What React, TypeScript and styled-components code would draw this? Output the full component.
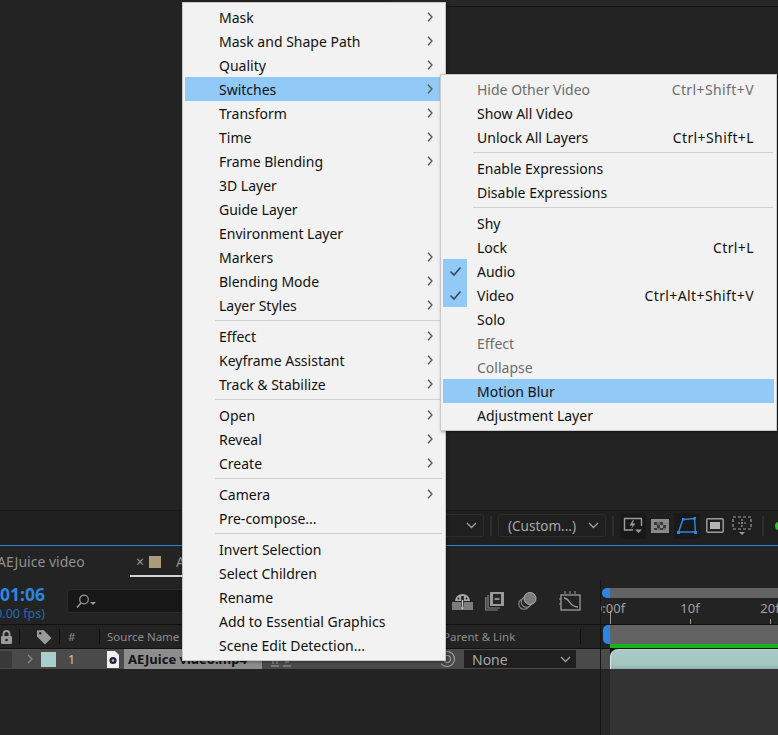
import React from 'react';
import styled, { createGlobalStyle } from 'styled-components';

type MenuEntry = {
  label?: string;
  sub?: boolean;
  shortcut?: string;
  disabled?: boolean;
  active?: boolean;
  checked?: boolean;
  sep?: boolean;
};

const layerMenu: MenuEntry[] = [
  { label: 'Mask', sub: true },
  { label: 'Mask and Shape Path', sub: true },
  { label: 'Quality', sub: true },
  { label: 'Switches', sub: true, active: true },
  { label: 'Transform', sub: true },
  { label: 'Time', sub: true },
  { label: 'Frame Blending', sub: true },
  { label: '3D Layer' },
  { label: 'Guide Layer' },
  { label: 'Environment Layer' },
  { label: 'Markers', sub: true },
  { label: 'Blending Mode', sub: true },
  { label: 'Layer Styles', sub: true },
  { sep: true },
  { label: 'Effect', sub: true },
  { label: 'Keyframe Assistant', sub: true },
  { label: 'Track & Stabilize', sub: true },
  { sep: true },
  { label: 'Open', sub: true },
  { label: 'Reveal', sub: true },
  { label: 'Create', sub: true },
  { sep: true },
  { label: 'Camera', sub: true },
  { label: 'Pre-compose...' },
  { sep: true },
  { label: 'Invert Selection' },
  { label: 'Select Children' },
  { label: 'Rename' },
  { label: 'Add to Essential Graphics' },
  { label: 'Scene Edit Detection...' },
];

const switchesMenu: MenuEntry[] = [
  { label: 'Hide Other Video', shortcut: 'Ctrl+Shift+V', disabled: true },
  { label: 'Show All Video' },
  { label: 'Unlock All Layers', shortcut: 'Ctrl+Shift+L' },
  { sep: true },
  { label: 'Enable Expressions' },
  { label: 'Disable Expressions' },
  { sep: true },
  { label: 'Shy' },
  { label: 'Lock', shortcut: 'Ctrl+L' },
  { label: 'Audio', checked: true },
  { label: 'Video', shortcut: 'Ctrl+Alt+Shift+V', checked: true },
  { label: 'Solo' },
  { label: 'Effect', disabled: true },
  { label: 'Collapse', disabled: true },
  { label: 'Motion Blur', active: true },
  { label: 'Adjustment Layer' },
];

const GlobalStyle = createGlobalStyle`
  html, body {
    margin: 0;
    padding: 0;
    background: #232323;
  }
`;

const Page = styled.div`
  position: relative;
  width: 778px;
  height: 735px;
  overflow: hidden;
  display: flex;
  flex-direction: column;
  background: #232323;
  font-family: 'Noto Sans', 'Open Sans', sans-serif;
`;

const TopEdge = styled.div`
  height: 7px;
  flex: none;
  padding-left: 391px;
  box-sizing: border-box;
  &::after {
    content: '';
    display: block;
    height: 7px;
    box-sizing: border-box;
    background: #262626;
    border-bottom: 1px solid #141414;
  }
`;

const Viewer = styled.div`
  flex: none;
  height: 503px;
`;

const ViewerToolbar = styled.div`
  flex: none;
  height: 35px;
  box-sizing: border-box;
  padding: 0 0 5px 440px;
  display: flex;
  align-items: center;
  background: #1f1f1f;
  border-top: 1px solid #1a1a1a;
`;

const Select = styled.div<{ $w: number }>`
  width: ${(p) => p.$w}px;
  height: 23px;
  flex: none;
  box-sizing: border-box;
  padding: 0 6px 0 9px;
  display: flex;
  align-items: center;
  justify-content: space-between;
  border: 1px solid #2c2c2c;
  border-radius: 3px;
  font-size: 13.5px;
  color: #a8a8a8;
`;

const ToolSep = styled.div<{ $mx: number }>`
  width: 2px;
  height: 20px;
  flex: none;
  margin: 0 ${(p) => p.$mx}px;
  background: #2e2e2e;
`;

const ToolButton = styled.div<{ $on?: boolean; $w: number; $ml?: number }>`
  width: ${(p) => p.$w}px;
  height: 26px;
  flex: none;
  margin-left: ${(p) => p.$ml ?? 0}px;
  display: flex;
  align-items: center;
  justify-content: center;
  background: ${(p) => (p.$on ? '#191919' : 'transparent')};
  border-radius: 3px;
`;

const GreenDot = styled.div`
  width: 8px;
  height: 8px;
  flex: none;
  border-radius: 50%;
  background: #22c71f;
  margin-left: 2px;
`;

const BlueLine = styled.div`
  height: 1px;
  flex: none;
  background: #2d84d8;
`;

const TabsRow = styled.div`
  flex: none;
  height: 34px;
  display: flex;
  margin-left: -3px;
`;

const Tab = styled.div<{ $w: number; $on?: boolean }>`
  width: ${(p) => p.$w}px;
  height: 31px;
  flex: none;
  box-sizing: border-box;
  padding-top: 2px;
  display: flex;
  align-items: center;
  font-size: 14px;
  color: #8f8f8f;
  white-space: nowrap;
  border-bottom: 2px solid ${(p) => (p.$on ? '#d2d2d2' : 'transparent')};
`;

const TabClose = styled.span`
  width: 19px;
  flex: none;
  padding-left: 1px;
  box-sizing: border-box;
  font-size: 14px;
  text-align: center;
  color: #9a9a9a;
`;

const TabSwatch = styled.span`
  width: 12px;
  height: 12px;
  flex: none;
  margin-right: 15px;
  background: #ab9b78;
`;

const Workspace = styled.div`
  flex: 1;
  min-height: 0;
  display: grid;
  grid-template-columns: 601px 1fr;
`;

const LeftPane = styled.div`
  display: flex;
  flex-direction: column;
  border-right: 1px solid #141414;
  min-width: 0;
`;

const ControlsRow = styled.div`
  flex: none;
  height: 44px;
  display: flex;
  align-items: center;
  padding-right: 19px;
`;

const TimeBlock = styled.div`
  width: 45px;
  flex: none;
  overflow: hidden;
  display: flex;
  flex-direction: column;
  align-items: flex-end;
  white-space: nowrap;
  color: #2b86e0;
  margin-top: 2px;
`;

const TimeCode = styled.div`
  font-size: 17.5px;
  font-weight: 700;
  line-height: 21px;
`;

const Fps = styled.div`
  font-size: 12.5px;
  line-height: 17px;
  color: #1f6cb8;
`;

const SearchBox = styled.div`
  width: 200px;
  height: 24px;
  flex: none;
  margin: -2px 0 0 22px;
  box-sizing: border-box;
  padding-left: 8px;
  display: flex;
  align-items: center;
  background: #171717;
  border: 1px solid #2a2a2a;
  border-radius: 3px;
`;

const RowIcons = styled.div`
  margin-left: auto;
  margin-top: -2px;
  display: flex;
  align-items: center;
`;

const RowIcon = styled.div<{ $ml?: number }>`
  display: flex;
  margin-left: ${(p) => p.$ml ?? 0}px;
`;

const HeaderRow = styled.div`
  flex: none;
  height: 25px;
  box-sizing: border-box;
  display: flex;
  align-items: center;
  background: #232323;
  border-top: 1px solid #111;
  border-bottom: 1px solid #111;
  font-size: 11.5px;
  color: #8c8c8c;
`;

const HeaderCell = styled.div<{ $w: number; $pl: number; $push?: boolean }>`
  width: ${(p) => p.$w}px;
  height: 15px;
  flex: none;
  box-sizing: border-box;
  padding-left: ${(p) => p.$pl}px;
  display: flex;
  align-items: center;
  white-space: nowrap;
  border-right: 1px solid #0f0f0f;
  margin-left: ${(p) => (p.$push ? 'auto' : 0)};
  margin-right: ${(p) => (p.$push ? '19px' : 0)};
`;

const LayerRow = styled.div`
  flex: none;
  height: 20px;
  display: flex;
  align-items: center;
  background: #4a4a4a;
  color: #c4c4c4;
  white-space: nowrap;
`;

const AvBox = styled.div`
  width: 12px;
  height: 17px;
  flex: none;
  background: #393939;
`;

const Twirl = styled.div`
  width: 29px;
  flex: none;
  padding-left: 15px;
  box-sizing: border-box;
  display: flex;
`;

const LabelSwatch = styled.div`
  width: 15px;
  height: 15px;
  flex: none;
  background: #a9cfcc;
`;

const LayerIndex = styled.div`
  width: 51px;
  flex: none;
  padding-left: 12px;
  box-sizing: border-box;
  font-size: 12.5px;
`;

const SourceIcon = styled.div`
  width: 17px;
  flex: none;
  display: flex;
`;

const SourceName = styled.div`
  width: 138px;
  height: 20px;
  flex: none;
  box-sizing: border-box;
  padding-left: 4px;
  display: flex;
  align-items: center;
  background: #8d8d8d;
  font-size: 13px;
  font-weight: 700;
  color: #141414;
`;

const SwitchMarks = styled.div`
  flex: none;
  display: flex;
  align-items: flex-end;
  align-self: flex-end;
  margin-left: 9px;
  padding-bottom: 2px;
`;

const ParentCell = styled.div`
  margin-left: 150px;
  display: flex;
  align-items: center;
`;

const ParentSelect = styled.div`
  width: 112px;
  height: 18px;
  flex: none;
  margin-left: 6px;
  box-sizing: border-box;
  padding: 0 5px 0 8px;
  display: flex;
  align-items: center;
  justify-content: space-between;
  background: #1f1f1f;
  font-size: 14px;
  color: #a8a8a8;
`;

const RightPane = styled.div`
  display: flex;
  flex-direction: column;
  min-width: 0;
  overflow: hidden;
`;

const Lane = styled.div<{ $h: number }>`
  flex: none;
  height: ${(p) => p.$h}px;
  display: grid;
  grid-template-columns: 9px 1fr;
`;

const NavLane = styled.div`
  flex: none;
  height: 18px;
  box-sizing: border-box;
  padding-top: 8px;
  display: grid;
  grid-template-columns: 9px 1fr;
`;

const Handle = styled.div<{ $inset: number }>`
  margin-left: ${(p) => p.$inset}px;
  background: #2b86e0;
  border-radius: 5px 0 0 5px;
`;

const GrayBar = styled.div`
  background: #636363;
`;

const Ruler = styled.div`
  flex: none;
  height: 27px;
  display: flex;
  overflow: hidden;
  border-bottom: 1px solid #0f0f0f;
  box-sizing: border-box;
`;

const RulerMark = styled.div<{ $first?: boolean }>`
  width: 80px;
  flex: none;
  margin-left: ${(p) => (p.$first ? '-31px' : 0)};
  display: flex;
  flex-direction: column;
  align-items: center;
  justify-content: space-between;
  font-size: 13px;
  line-height: 20px;
  color: #a0a0a0;
  &::after {
    content: '';
    width: 1px;
    height: ${(p) => (p.$first ? 13 : 5)}px;
    margin-top: ${(p) => (p.$first ? -10 : -2)}px;
    background: #9a9a9a;
  }
`;

const GreenBar = styled.div`
  background: #12b71b;
`;

const BlackRule = styled.div`
  height: 1px;
  flex: none;
  background: #111;
`;

const ClipGutter = styled.div`
  background: #4a4a4a;
`;

const ClipTrack = styled.div`
  background: #111;
`;

const Clip = styled.div`
  height: 100%;
  box-sizing: border-box;
  border-left: 1px solid #dfe9e7;
  border-top: 1px solid #b9d3cf;
  border-top-left-radius: 8px;
  background: linear-gradient(180deg, #a9cbc6 0%, #a3c5c0 80%, #8fb1ac 100%);
`;

const EmptyTrack = styled.div`
  flex: 1;
  display: grid;
  grid-template-columns: 9px 1fr;
`;

const EmptyGutter = styled.div`
  background: #272727;
`;

const EmptyBody = styled.div`
  background: #333;
`;

const MenuPanel = styled.div<{ $left: number; $top: number; $w: number; $z: number }>`
  position: absolute;
  left: ${(p) => p.$left}px;
  top: ${(p) => p.$top}px;
  width: ${(p) => p.$w}px;
  z-index: ${(p) => p.$z};
  box-sizing: border-box;
  padding: 2px 2px 3px;
  background: #f2f2f2;
  border: 1px solid #c8c8c8;
  box-shadow: 1px 1px 3px rgba(0, 0, 0, 0.35);
  font-family: 'Noto Sans', 'Open Sans', sans-serif;
  font-size: 14px;
  color: #111;
`;

const MenuRow = styled.div<{ $active?: boolean; $disabled?: boolean }>`
  position: relative;
  height: 24px;
  padding: 0 20px 0 34px;
  display: flex;
  align-items: center;
  justify-content: space-between;
  white-space: nowrap;
  background: ${(p) => (p.$active ? '#91c9f7' : 'transparent')};
  color: ${(p) => (p.$disabled ? '#6d6d6d' : '#111')};
`;

const Shortcut = styled.span`
  letter-spacing: 0.4px;
`;

const MenuSep = styled.div`
  height: 1px;
  margin: 3px 1px 3px 30px;
  background: #d0d0d0;
`;

const SubArrow = styled.svg`
  position: absolute;
  right: 10px;
  top: 7px;
`;

const CheckCell = styled.div`
  position: absolute;
  left: 0;
  top: 0;
  width: 24px;
  height: 24px;
  display: flex;
  align-items: center;
  justify-content: center;
  background: #91c9f7;
`;

const Chevron = ({ color = '#a0a0a0' }: { color?: string }) => (
  <svg width="11" height="7" viewBox="0 0 11 7">
    <path d="M1 1l4.5 4.5L10 1" fill="none" stroke={color} strokeWidth="1.3" />
  </svg>
);

function MenuList({ items }: { items: MenuEntry[] }) {
  return (
    <>
      {items.map((item, i) =>
        item.sep ? (
          <MenuSep key={i} />
        ) : (
          <MenuRow key={i} $active={item.active} $disabled={item.disabled}>
            {item.checked && (
              <CheckCell>
                <svg width="13" height="11" viewBox="0 0 13 11">
                  <path d="M1.5 5.5l3.5 3.5 6.5-7.5" fill="none" stroke="#3c4a55" strokeWidth="1.6" />
                </svg>
              </CheckCell>
            )}
            <span>{item.label}</span>
            {item.shortcut && <Shortcut>{item.shortcut}</Shortcut>}
            {item.sub && (
              <SubArrow width="6" height="10" viewBox="0 0 6 10">
                <path d="M1 .8l4 4.2-4 4.2" fill="none" stroke="#555" strokeWidth="1.3" />
              </SubArrow>
            )}
          </MenuRow>
        )
      )}
    </>
  );
}

const gray = '#9b9b9b';

const FastPreviewIcon = () => (
  <svg width="20" height="17" viewBox="0 0 20 17">
    <path d="M10 13H1.5V1.5h17V9" fill="none" stroke={gray} strokeWidth="1.4" />
    <path d="M10 3L6.5 8.5h3L8 12l4.5-5.5h-3L11 3z" fill={gray} />
    <path d="M12 12.5h7L15.5 16z" fill={gray} />
  </svg>
);

const CheckerIcon = () => (
  <svg width="18" height="14" viewBox="0 0 18 14">
    <rect width="18" height="14" fill="#8a8a8a" />
    <path d="M3 3h3v3H3zM9 3h3v3H9zM6 6h3v3H6zM12 6h3v3h-3zM3 9h3v2H3zM9 9h3v2H9z" fill="#3a3a3a" />
    <path d="M6 3h3v3H6zM6 9h3v2H6zM12 9h3v2h-3z" fill="#6a6a6a" />
  </svg>
);

const MaskIcon = () => (
  <svg width="20" height="17" viewBox="0 0 20 17">
    <path d="M6 2.5L17.5 1.5l1 13.5H1.5z" fill="none" stroke="#2b86e0" strokeWidth="1.5" />
    <path d="M5 1h2.5v2.5H5zM16.5 0H19v2.5h-2.5zM0 14h3v3H0zM17 14h3v3h-3z" fill="#2b86e0" />
  </svg>
);

const RectIcon = () => (
  <svg width="18" height="15" viewBox="0 0 18 15">
    <rect x=".8" y=".8" width="16.4" height="13.4" rx="1" fill="none" stroke={gray} strokeWidth="1.5" />
    <rect x="4" y="4" width="10" height="7" fill="#b5b5b5" />
  </svg>
);

const GuidesIcon = () => (
  <svg width="20" height="20" viewBox="0 0 20 20">
    <rect x="1" y="1" width="18" height="12" fill="none" stroke={gray} strokeWidth="1.2" strokeDasharray="3 2" />
    <path d="M10 3v8M6 7h8" stroke={gray} strokeWidth="1.2" strokeDasharray="2 1" />
    <path d="M7 16h6l-3 3z" fill={gray} />
  </svg>
);

const SearchIcon = () => (
  <svg width="21" height="15" viewBox="0 0 21 15">
    <circle cx="8" cy="5.5" r="4.3" fill="none" stroke="#9a9a9a" strokeWidth="1.2" />
    <path d="M5 9L1 13.5" stroke="#9a9a9a" strokeWidth="1.5" />
    <path d="M14 8h6l-3 3z" fill="#9a9a9a" />
  </svg>
);

const LockIcon = () => (
  <svg width="13" height="14" viewBox="0 0 13 14">
    <path d="M3.5 6V4a3 3 0 016 0v2" fill="none" stroke="#9a9a9a" strokeWidth="1.8" />
    <rect x="1" y="6" width="11" height="8" rx="1" fill="#9a9a9a" />
    <circle cx="6.5" cy="10" r="1.3" fill="#232323" />
  </svg>
);

const TagIcon = () => (
  <svg width="16" height="16" viewBox="0 0 16 16">
    <path d="M1 1.5L7.5 1 15.5 9 9 15.5 1 7.5z" fill="#9a9a9a" />
    <circle cx="4.2" cy="4.2" r="1.2" fill="#232323" />
  </svg>
);

const FileIcon = () => (
  <svg width="12" height="17" viewBox="0 0 12 17">
    <path d="M0 0h8l4 4v13H0z" fill="#f1f1f1" />
    <circle cx="6" cy="9.5" r="3.6" fill="#2a2233" />
    <circle cx="6" cy="9.5" r="1.3" fill="#c8a4d8" />
  </svg>
);

const DraftIcon = () => (
  <svg width="21" height="17" viewBox="0 0 21 17">
    <path d="M0 9h21v8H0z" fill="#7d7d7d" />
    <path d="M3 8a7.5 7 0 0115 0z" fill="#a8a8a8" />
    <path d="M9.2 3v11h2.6V3z" fill="#1f1f1f" />
    <path d="M9.8 7h1.4v9H9.8z" fill="#c4c4c4" />
    <circle cx="6.5" cy="5.5" r="1" fill="#232323" />
    <circle cx="14.5" cy="5.5" r="1" fill="#232323" />
  </svg>
);

const FilmIcon = () => (
  <svg width="19" height="19" viewBox="0 0 19 19">
    <path d="M.8 5v13h12" fill="none" stroke="#8a8a8a" strokeWidth="1.2" />
    <path d="M3 3v13h12" fill="none" stroke="#8a8a8a" strokeWidth="1.2" />
    <rect x="5" y="0" width="14" height="14" fill="#9a9a9a" />
    <rect x="8" y="2" width="8" height="10" fill="#262626" />
    <path d="M9.5 7h5" stroke="#b0b0b0" strokeWidth="1.5" />
  </svg>
);

const LayersIcon = () => (
  <svg width="19" height="18" viewBox="0 0 19 18">
    <circle cx="6" cy="12" r="5.3" fill="none" stroke="#8a8a8a" strokeWidth="1.1" />
    <circle cx="8.5" cy="10" r="5.3" fill="#232323" stroke="#8a8a8a" strokeWidth="1.1" />
    <circle cx="12" cy="6.5" r="6" fill="#7a7a7a" stroke="#b0b0b0" strokeWidth="1" />
  </svg>
);

const GraphIcon = () => (
  <svg width="22" height="20" viewBox="0 0 22 20">
    <rect x="2" y="4" width="19" height="15" fill="none" stroke="#9a9a9a" strokeWidth="1.3" />
    <path d="M5 7c6 0 5 9 14 9" fill="none" stroke="#9a9a9a" strokeWidth="1.3" />
    <path d="M6 0v3M11 0v3M16 0v3M0 8h2M0 13h2" stroke="#9a9a9a" strokeWidth="1" />
  </svg>
);

const SpiralIcon = () => (
  <svg width="17" height="18" viewBox="0 0 17 18">
    <circle cx="6" cy="9" r="7.5" fill="none" stroke="#a0a0a0" strokeWidth="1.1" />
    <circle cx="6" cy="9" r="3.5" fill="none" stroke="#a0a0a0" strokeWidth="1.1" />
  </svg>
);

const SwitchGlyph = () => (
  <svg width="20" height="8" viewBox="0 0 20 8">
    <path d="M2 0v5M0 7h8M6 0v5M12 7h8M14 3h4" stroke="#a5a5a5" strokeWidth="1" />
  </svg>
);

export default function App() {
  return (
    <Page>
      <GlobalStyle />
      <TopEdge />
      <Viewer />
      <ViewerToolbar>
        <Select $w={44}>
          <span />
          <Chevron />
        </Select>
        <ToolSep $mx={6} />
        <Select $w={108}>
          <span>(Custom...)</span>
          <Chevron />
        </Select>
        <ToolSep $mx={6} />
        <ToolButton $on $w={26}>
          <FastPreviewIcon />
        </ToolButton>
        <ToolButton $w={20} $ml={4}>
          <CheckerIcon />
        </ToolButton>
        <ToolButton $on $w={26} $ml={4}>
          <MaskIcon />
        </ToolButton>
        <ToolButton $w={20} $ml={5}>
          <RectIcon />
        </ToolButton>
        <ToolButton $w={22} $ml={6}>
          <GuidesIcon />
        </ToolButton>
        <ToolSep $mx={9} />
        <GreenDot />
      </ViewerToolbar>
      <BlueLine />
      <TabsRow>
        <Tab $w={133}>AEJuice video</Tab>
        <Tab $w={150} $on>
          <TabClose>×</TabClose>
          <TabSwatch />
          AEJuice video
        </Tab>
      </TabsRow>
      <Workspace>
        <LeftPane>
          <ControlsRow>
            <TimeBlock>
              <TimeCode>0:00:01:06</TimeCode>
              <Fps>(30.00 fps)</Fps>
            </TimeBlock>
            <SearchBox>
              <SearchIcon />
            </SearchBox>
            <RowIcons>
              <RowIcon>
                <DraftIcon />
              </RowIcon>
              <RowIcon $ml={12}>
                <FilmIcon />
              </RowIcon>
              <RowIcon $ml={14}>
                <LayersIcon />
              </RowIcon>
              <RowIcon $ml={22}>
                <GraphIcon />
              </RowIcon>
            </RowIcons>
          </ControlsRow>
          <HeaderRow>
            <HeaderCell $w={20} $pl={0}>
              <LockIcon />
            </HeaderCell>
            <HeaderCell $w={40} $pl={16}>
              <TagIcon />
            </HeaderCell>
            <HeaderCell $w={40} $pl={8}>
              #
            </HeaderCell>
            <HeaderCell $w={200} $pl={7}>
              Source Name
            </HeaderCell>
            <HeaderCell $w={141} $pl={3} $push>
              Parent &amp; Link
            </HeaderCell>
          </HeaderRow>
          <LayerRow>
            <AvBox />
            <Twirl>
              <svg width="6" height="10" viewBox="0 0 6 10">
                <path d="M1 1l4 4-4 4" fill="none" stroke="#8f8f8f" strokeWidth="1.2" />
              </svg>
            </Twirl>
            <LabelSwatch />
            <LayerIndex>1</LayerIndex>
            <SourceIcon>
              <FileIcon />
            </SourceIcon>
            <SourceName>AEJuice video.mp4</SourceName>
            <SwitchMarks>
              <SwitchGlyph />
            </SwitchMarks>
            <ParentCell>
              <SpiralIcon />
              <ParentSelect>
                None
                <Chevron />
              </ParentSelect>
            </ParentCell>
          </LayerRow>
        </LeftPane>
        <RightPane>
          <NavLane>
            <Handle $inset={1} />
            <GrayBar />
          </NavLane>
          <Ruler>
            <RulerMark $first>0:00f</RulerMark>
            <RulerMark>10f</RulerMark>
            <RulerMark>20f</RulerMark>
          </Ruler>
          <Lane $h={19}>
            <Handle $inset={2} />
            <GrayBar />
          </Lane>
          <Lane $h={4}>
            <span />
            <GreenBar />
          </Lane>
          <BlackRule />
          <Lane $h={20}>
            <ClipGutter />
            <ClipTrack>
              <Clip />
            </ClipTrack>
          </Lane>
          <EmptyTrack>
            <EmptyGutter />
            <EmptyBody />
          </EmptyTrack>
        </RightPane>
      </Workspace>
      <MenuPanel $left={182} $top={2} $w={264} $z={1}>
        <MenuList items={layerMenu} />
      </MenuPanel>
      <MenuPanel $left={440} $top={74} $w={337} $z={2}>
        <MenuList items={switchesMenu} />
      </MenuPanel>
    </Page>
  );
}
